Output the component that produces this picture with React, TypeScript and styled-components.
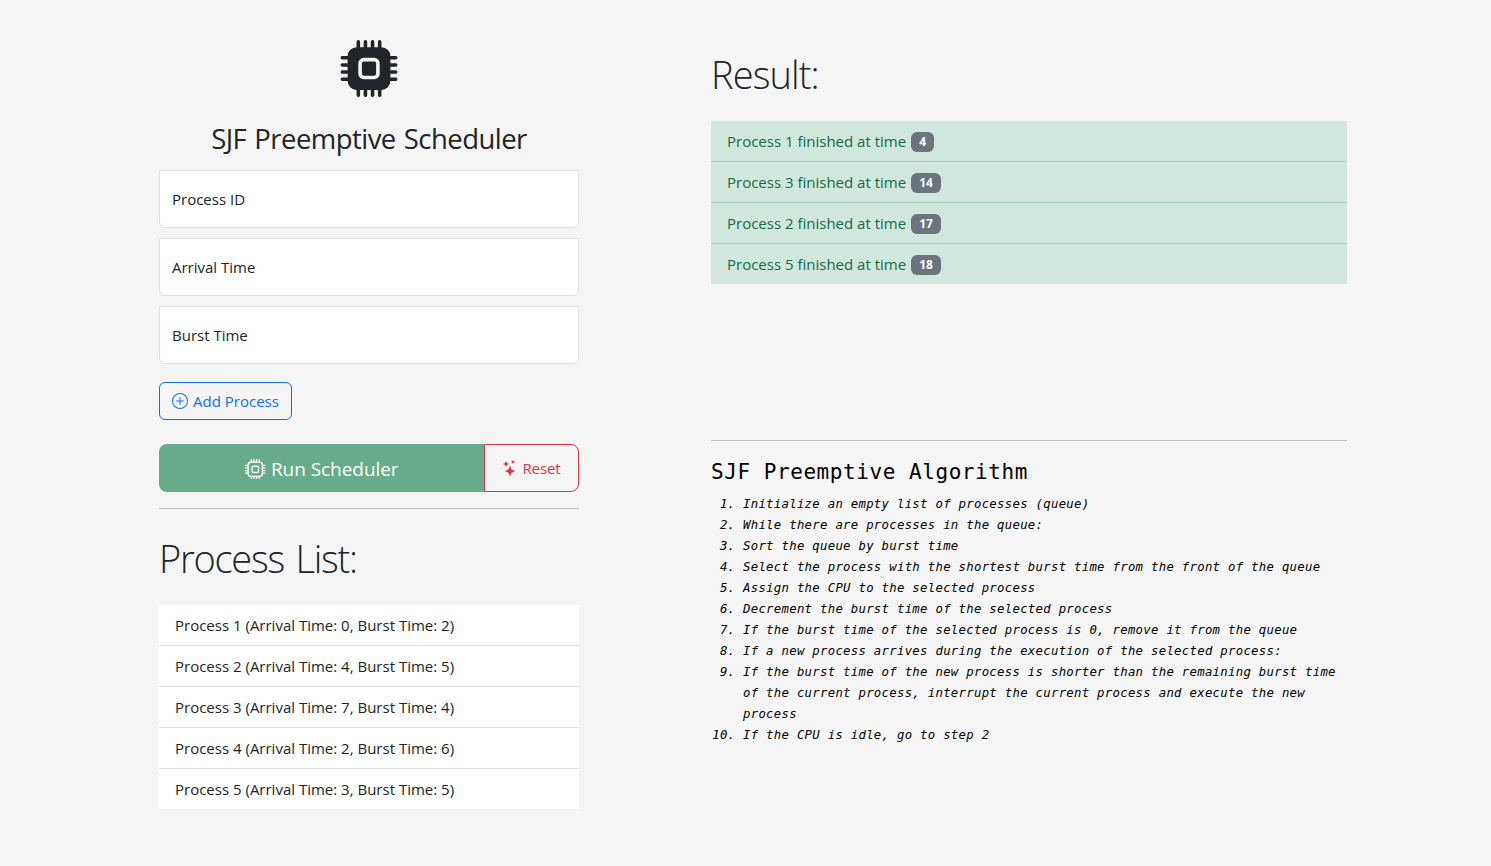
import React from "react";
import styled, { createGlobalStyle } from "styled-components";
import { BsCpu, BsCpuFill, BsPlusCircle, BsStars } from "react-icons/bs";

const GlobalStyle = createGlobalStyle`
  *, *::before, *::after { box-sizing: border-box; }
  body {
    margin: 0;
    background: #f5f5f5;
    color: #212529;
    font-family: "Open Sans", "Noto Sans", sans-serif;
    font-size: 15px;
    line-height: 24px;
  }
  h1, h2, h3, ul, ol, p { margin: 0; padding: 0; font-weight: 400; }
`;

const Page = styled.main`
  display: grid;
  grid-template-columns: 420px 636px;
  column-gap: 132px;
  width: 1491px;
  min-height: 866px;
  padding: 0 144px 0 159px;
`;

const Column = styled.section`
  display: flex;
  flex-direction: column;
`;

const Brand = styled.header`
  display: flex;
  flex-direction: column;
  align-items: center;
  padding-top: 40px;
  svg { display: block; width: 58px; height: 57px; }
`;

const Title = styled.h1`
  margin-top: 25px;
  font-size: 27.5px;
  line-height: 34px;
  letter-spacing: -0.55px;
  word-spacing: 1.5px;
  white-space: nowrap;
`;

const Fields = styled.div`
  display: flex;
  flex-direction: column;
  gap: 10px;
  margin-top: 14px;
`;

const Field = styled.label`
  display: flex;
  align-items: center;
  height: 58px;
  padding: 0 12px;
  background: #fff;
  border: 1px solid #dee2e6;
  border-radius: 1px 1px 6px 6px;
`;

const Button = styled.button`
  display: flex;
  align-items: center;
  justify-content: center;
  padding: 0;
  background: transparent;
  font: inherit;
  white-space: nowrap;
`;

const AddButton = styled(Button)`
  gap: 5px;
  width: 133px;
  height: 38px;
  margin-top: 18px;
  color: #0d6efd;
  border: 1px solid #0d6efd;
  border-radius: 6px;
`;

const Actions = styled.div`
  display: flex;
  height: 48px;
  margin-top: 24px;
`;

const RunButton = styled(Button)`
  flex: 1;
  gap: 5px;
  padding: 2px 0 0 1px;
  color: #fff;
  background: #67ad8c;
  border: 0;
  border-radius: 8px 0 0 8px;
  font-size: 19px;
  letter-spacing: -0.05px;
`;

const ResetButton = styled(Button)`
  gap: 4px;
  width: 95px;
  color: #dc3545;
  border: 1px solid #dc3545;
  border-radius: 0 8px 8px 0;
  letter-spacing: -0.1px;
`;

const Rule = styled.div<{ $top: number }>`
  height: 1px;
  margin-top: ${(p) => p.$top}px;
  background: #c0c1c2;
`;

const Display = styled.h2<{ $top: number; $spacing: number }>`
  margin-top: ${(p) => p.$top}px;
  font-size: 38px;
  font-weight: 300;
  line-height: 48px;
  letter-spacing: ${(p) => p.$spacing}px;
  word-spacing: 3px;
`;

const List = styled.ul<{ $success?: boolean }>`
  margin-top: 23px;
  list-style: none;
  background: ${(p) => (p.$success ? "#d1e7dd" : "#fff")};
  color: ${(p) => (p.$success ? "#146c43" : "#212529")};
  li { border-color: ${(p) => (p.$success ? "#a3cfbb" : "#dee2e6")}; }
`;

const Item = styled.li`
  display: flex;
  align-items: center;
  gap: 5px;
  height: 41px;
  padding: 0 16px;
  border-bottom: 1px solid;
  white-space: nowrap;
  &:last-child { height: 40px; border-bottom: 0; }
`;

const Badge = styled.span`
  padding: 0 8px;
  height: 20px;
  margin-top: 1px;
  border-radius: 6px;
  background: #6c757d;
  color: #fff;
  font-size: 12px;
  font-weight: 700;
  line-height: 20px;
`;

const Results = styled.div`
  height: 370px;
  padding-top: 50px;
`;

const Algorithm = styled.article`
  color: #000;
  font-family: "DejaVu Sans Mono", "Liberation Mono", monospace;
`;

const AlgorithmTitle = styled.h3`
  margin-top: 17px;
  font-size: 21px;
  line-height: 29px;
  letter-spacing: 0.56px;
`;

const Steps = styled.ol`
  margin-top: 7px;
  padding-left: 32px;
  font-size: 12.3px;
  font-style: italic;
  line-height: 21px;
  letter-spacing: 0.295px;
`;

const processes = [
  { id: 1, arrival: 0, burst: 2 },
  { id: 2, arrival: 4, burst: 5 },
  { id: 3, arrival: 7, burst: 4 },
  { id: 4, arrival: 2, burst: 6 },
  { id: 5, arrival: 3, burst: 5 },
];

const finished = [
  { id: 1, time: 4 },
  { id: 3, time: 14 },
  { id: 2, time: 17 },
  { id: 5, time: 18 },
];

const steps = [
  "Initialize an empty list of processes (queue)",
  "While there are processes in the queue:",
  "Sort the queue by burst time",
  "Select the process with the shortest burst time from the front of the queue",
  "Assign the CPU to the selected process",
  "Decrement the burst time of the selected process",
  "If the burst time of the selected process is 0, remove it from the queue",
  "If a new process arrives during the execution of the selected process:",
  "If the burst time of the new process is shorter than the remaining burst time of the current process, interrupt the current process and execute the new process",
  "If the CPU is idle, go to step 2",
];

export default function App() {
  return (
    <>
      <GlobalStyle />
      <Page>
        <Column>
          <Brand>
            <BsCpuFill />
            <Title>SJF Preemptive Scheduler</Title>
          </Brand>
          <Fields>
            <Field>Process ID</Field>
            <Field>Arrival Time</Field>
            <Field>Burst Time</Field>
          </Fields>
          <AddButton>
            <BsPlusCircle size={16} />
            <span>Add Process</span>
          </AddButton>
          <Actions>
            <RunButton>
              <BsCpu size={20.5} />
              <span>Run Scheduler</span>
            </RunButton>
            <ResetButton>
              <BsStars size={16} />
              <span>Reset</span>
            </ResetButton>
          </Actions>
          <Rule $top={16} />
          <Display $top={25} $spacing={-1.25}>Process List:</Display>
          <List>
            {processes.map((p) => (
              <Item key={p.id}>
                {`Process ${p.id} (Arrival Time: ${p.arrival}, Burst Time: ${p.burst})`}
              </Item>
            ))}
          </List>
        </Column>
        <Column>
          <Results>
            <Display $top={0} $spacing={-0.9}>Result:</Display>
            <List $success>
              {finished.map((f) => (
                <Item key={f.id}>
                  <span>{`Process ${f.id} finished at time`}</span>
                  <Badge>{f.time}</Badge>
                </Item>
              ))}
            </List>
          </Results>
          <Rule $top={70} />
          <Algorithm>
            <AlgorithmTitle>SJF Preemptive Algorithm</AlgorithmTitle>
            <Steps>
              {steps.map((s) => (
                <li key={s}>{s}</li>
              ))}
            </Steps>
          </Algorithm>
        </Column>
      </Page>
    </>
  );
}
